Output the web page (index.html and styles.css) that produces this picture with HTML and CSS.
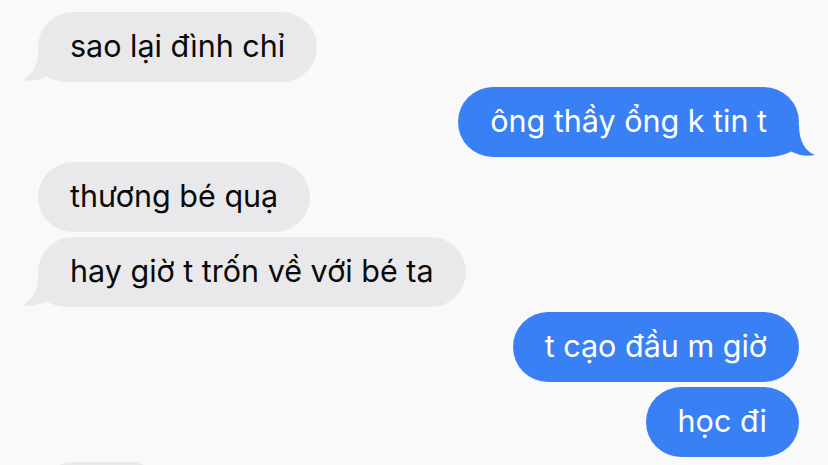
FILE: index.html
```html
<!DOCTYPE html>
<html lang="vi">
<head>
<meta charset="utf-8">
<title>Tin nhắn</title>
<link rel="stylesheet" href="styles.css">
</head>
<body>
<main class="thread">
  <div class="msg in tail">sao lại đình chỉ<svg class="tail-svg" viewBox="0 0 52 32" aria-hidden="true"><path d="M17 0 C17 16 11 26 1 30 C9 31.6 17 30.4 25 26.5 C31 30 40 32 52 32 L52 0 Z"/></svg></div>
  <div class="msg out tail">ông thầy ổng k tin t<svg class="tail-svg" viewBox="0 0 52 32" aria-hidden="true"><path d="M17 0 C17 16 11 26 1 30 C9 31.6 17 30.4 25 26.5 C31 30 40 32 52 32 L52 0 Z"/></svg></div>
  <div class="msg in">thương bé quạ</div>
  <div class="msg in tail">hay giờ t trốn về với bé ta<svg class="tail-svg" viewBox="0 0 52 32" aria-hidden="true"><path d="M17 0 C17 16 11 26 1 30 C9 31.6 17 30.4 25 26.5 C31 30 40 32 52 32 L52 0 Z"/></svg></div>
  <div class="msg out">t cạo đầu m giờ</div>
  <div class="msg out">học đi</div>
  <div class="msg in stub"></div>
</main>
</body>
</html>
```
FILE: styles.css
```css
html, body {
  margin: 0;
  padding: 0;
  background: #f9f9f9;
  overflow: hidden;
  height: 465px;
}
.thread {
  position: relative;
  z-index: 0;
  display: flex;
  flex-direction: column;
  gap: 5px;
  padding: 12px 29px 0 38px;
  font-family: Inter, "Noto Sans", sans-serif;
  font-size: 30.5px;
}
.msg {
  position: relative;
  height: 70px;
  line-height: 68px;
  padding: 0 32px;
  border-radius: 35px;
  white-space: nowrap;
  width: max-content;
}
.msg.in {
  align-self: flex-start;
  background: #e9e9eb;
  color: #0a0a0a;
}
.msg.out {
  align-self: flex-end;
  background: #3a80f5;
  color: #ffffff;
}
.msg.stub {
  width: 127px;
  padding: 0;
}
.tail-svg {
  position: absolute;
  bottom: 0;
  width: 52px;
  height: 32px;
  z-index: -1;
}
.msg.in .tail-svg {
  left: -17px;
  fill: #e9e9eb;
}
.msg.out .tail-svg {
  right: -17px;
  fill: #3a80f5;
  transform: scaleX(-1);
}
```
